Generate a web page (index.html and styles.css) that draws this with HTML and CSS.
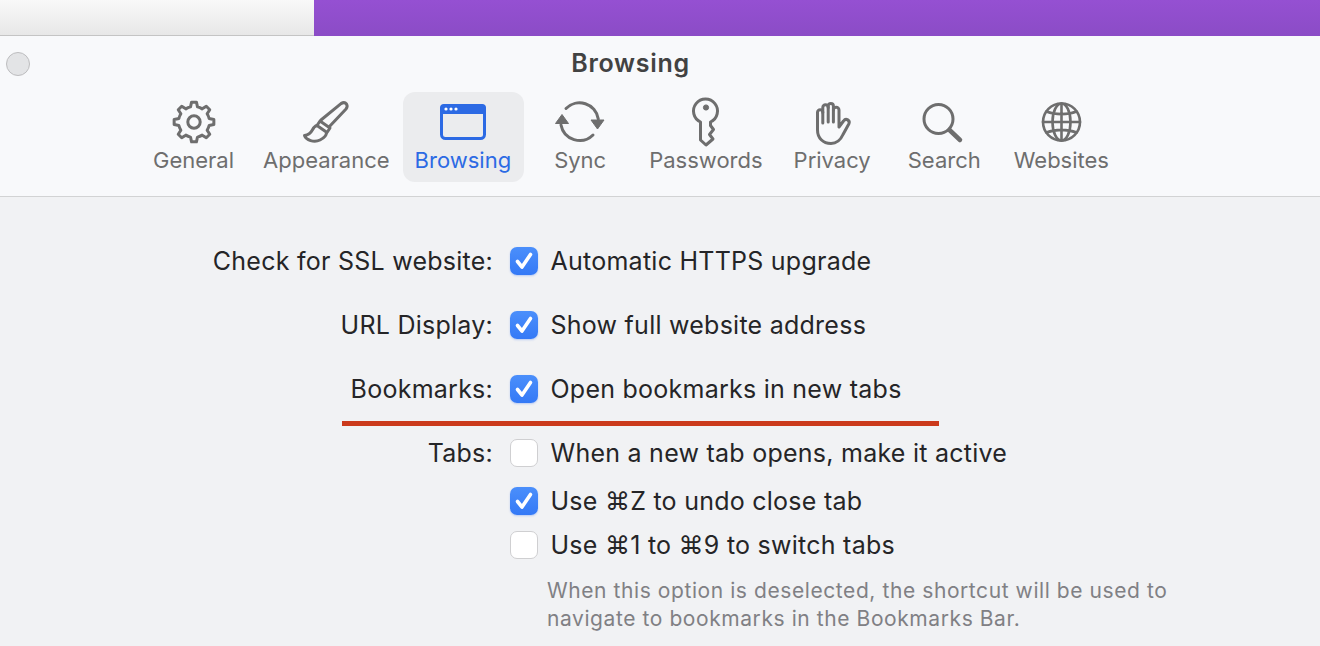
FILE: index.html
```html
<!DOCTYPE html>
<html lang="en">
<head>
<meta charset="utf-8">
<title>Browsing</title>
<link rel="stylesheet" href="styles.css">
</head>
<body>
<div class="backdrop">
  <div class="backdrop-light"></div>
  <div class="backdrop-purple"></div>
</div>
<main class="window">
  <header class="toolbar">
    <span class="close"></span>
    <h1 class="title">Browsing</h1>
    <nav class="tabs">
      <a class="tab tab-general">
        <svg class="icon" viewBox="0 0 60 52"><g transform="translate(8 4)" class="ln"><path d="M18.51 6.9L19.56 2.15H24.44L25.49 6.9A15.5 15.5 0 0 1 30.21 8.86L34.31 6.24L37.76 9.69L35.14 13.79A15.5 15.5 0 0 1 37.1 18.51L41.85 19.56V24.44L37.1 25.49A15.5 15.5 0 0 1 35.14 30.21L37.76 34.31L34.31 37.76L30.21 35.14A15.5 15.5 0 0 1 25.49 37.1L24.44 41.85H19.56L18.51 37.1A15.5 15.5 0 0 1 13.79 35.14L9.69 37.76L6.24 34.31L8.86 30.21A15.5 15.5 0 0 1 6.9 25.49L2.15 24.44V19.56L6.9 18.51A15.5 15.5 0 0 1 8.86 13.79L6.24 9.69L9.69 6.24L13.79 8.86A15.5 15.5 0 0 1 18.51 6.9Z"/><circle cx="22" cy="22" r="6.2"/></g></svg>
        <span class="tab-label">General</span>
      </a>
      <a class="tab tab-appearance">
        <svg class="icon" viewBox="0 0 60 52"><g class="ln"><path d="M25 24L45 7.6Q48.500 5.500 50.500 8Q52 10.500 50 13L33 31"/><path d="M24 25L34 32L31 36.500L21 29.500Z"/><path d="M21 29.500C15 31 18 38 8.500 39.500C10 44 18 47 24 44C29 41.500 30.500 38.500 30.500 36.500"/></g></svg>
        <span class="tab-label">Appearance</span>
      </a>
      <a class="tab tab-browsing is-active">
        <svg class="icon" viewBox="0 0 60 52"><rect class="win" x="8.500" y="9.500" width="43" height="33" rx="4"/><path class="win-bar" d="M11 8H49A4 4 0 0 1 53 12V18H7V12A4 4 0 0 1 11 8Z"/><circle class="dot" cx="13" cy="13" r="1.600"/><circle class="dot" cx="18" cy="13" r="1.600"/><circle class="dot" cx="23" cy="13" r="1.600"/></svg>
        <span class="tab-label">Browsing</span>
      </a>
      <a class="tab tab-sync">
        <svg class="icon" viewBox="0 0 60 52"><g class="ln"><path d="M16 12.500A19 19 0 0 1 48.300 23"/><path d="M11 29A19 19 0 0 0 43 39"/></g><path class="fill" d="M5.500 27.500H18.500L12 18.500Z"/><path class="fill" d="M41 24H54L47.500 33Z"/></svg>
        <span class="tab-label">Sync</span>
      </a>
      <a class="tab tab-passwords">
        <svg class="icon" viewBox="0 0 60 52"><g class="ln"><path d="M24.500 26V44L30 49L37 43L33.500 38.500L37.500 33.500L34.500 29.500V26A12 12 0 1 0 24.500 26Z"/></g><circle class="fill" cx="30" cy="11.500" r="2.600"/></svg>
        <span class="tab-label">Passwords</span>
      </a>
      <a class="tab tab-privacy">
        <svg class="icon" viewBox="0 0 60 52"><g class="ln"><path d="M20.800 27V16.500A2.600 2.600 0 0 0 15.500 16.500V34C15.500 42 21 47.500 29 47.500C36 47.500 39 43 41 38.500L46.800 28C48.500 24.500 44 21.500 41.500 25L37 31V14A2.700 2.700 0 0 0 31.400 14V26"/><path d="M20.800 16.500V11.500A2.700 2.700 0 0 1 26.200 11.500V26"/><path d="M26.200 11.500V10A2.600 2.600 0 0 1 31.400 10V14"/></g></svg>
        <span class="tab-label">Privacy</span>
      </a>
      <a class="tab tab-search">
        <svg class="icon" viewBox="0 0 60 52"><g class="ln"><circle cx="24.500" cy="23" r="14.500"/><path class="ln-heavy" d="M35.500 34L46 44"/></g></svg>
        <span class="tab-label">Search</span>
      </a>
      <a class="tab tab-websites">
        <svg class="icon" viewBox="0 0 60 52"><g class="ln ln-thin"><circle cx="30.500" cy="26" r="18.500"/><ellipse cx="30.500" cy="26" rx="9" ry="18.500"/><path d="M30.500 7.500V44.500M12 26H49M15.500 15.500C24 19 37 19 45.500 15.500M15.500 36.500C24 33 37 33 45.500 36.500"/></g></svg>
        <span class="tab-label">Websites</span>
      </a>
    </nav>
  </header>
  <section class="prefs">
    <div class="row">
      <span class="label">Check for SSL website:</span>
      <span class="box is-on"><svg viewBox="0 0 28 28"><path d="M7.500 14.500L12 20L20.500 7.500"/></svg></span>
      <span class="text">Automatic HTTPS upgrade</span>
    </div>
    <div class="row">
      <span class="label">URL Display:</span>
      <span class="box is-on"><svg viewBox="0 0 28 28"><path d="M7.500 14.500L12 20L20.500 7.500"/></svg></span>
      <span class="text">Show full website address</span>
    </div>
    <div class="row">
      <span class="label">Bookmarks:</span>
      <span class="box is-on"><svg viewBox="0 0 28 28"><path d="M7.500 14.500L12 20L20.500 7.500"/></svg></span>
      <span class="text">Open bookmarks in new tabs</span>
    </div>
    <div class="row row-tabs">
      <span class="label">Tabs:</span>
      <span class="box"></span>
      <span class="text">When a new tab opens, make it active</span>
    </div>
    <div class="row row-sub">
      <span class="label"></span>
      <span class="box is-on"><svg viewBox="0 0 28 28"><path d="M7.500 14.500L12 20L20.500 7.500"/></svg></span>
      <span class="text">Use ⌘Z to undo close tab</span>
    </div>
    <div class="row row-sub">
      <span class="label"></span>
      <span class="box"></span>
      <span class="text">Use ⌘1 to ⌘9 to switch tabs</span>
    </div>
    <p class="hint">When this option is deselected, the shortcut will be used to<br>navigate to bookmarks in the Bookmarks Bar.</p>
    <div class="annotation"></div>
  </section>
</main>
</body>
</html>
```
FILE: styles.css
```css
* { box-sizing: border-box; }
html, body { margin: 0; height: 100%; }
body {
  width: 1320px;
  height: 646px;
  overflow: hidden;
  display: flex;
  flex-direction: column;
  font-family: Inter, "Noto Sans", "Liberation Sans", sans-serif;
  background: #f1f2f4;
}
.backdrop {
  display: flex;
  height: 36px;
  flex: none;
}
.backdrop-light {
  width: 314px;
  background: linear-gradient(#f9f9f9, #e7e7e7);
  border-bottom: 1px solid #c4c4c4;
}
.backdrop-purple {
  flex: 1;
  background: linear-gradient(#9550d2, #8b4cc6);
}
.window {
  flex: 1;
  display: flex;
  flex-direction: column;
}
.toolbar {
  position: relative;
  height: 161px;
  flex: none;
  background: #f8f9fb;
  border-bottom: 1px solid #d2d3d4;
}
.close {
  position: absolute;
  left: 6px;
  top: 16px;
  width: 24px;
  height: 24px;
  border-radius: 50%;
  background: #e3e4e6;
  border: 1px solid #bdbdbf;
}
.title {
  margin: 0;
  padding: 12px 59px 0 0;
  height: 56px;
  text-align: center;
  font-size: 25px;
  line-height: 30px;
  font-weight: 600;
  letter-spacing: .7px;
  color: #424242;
}
.tabs {
  display: flex;
}
.tab {
  display: flex;
  flex-direction: column;
  align-items: center;
  height: 90px;
  padding: 4px 12px 0;
  border-radius: 12px;
  color: #6e6e6e;
}
.tab-general { margin-left: 141px; }
.tab-appearance { margin-left: 5px; }
.tab-browsing { margin-left: 1px; padding-right: 13px; }
.tab-sync { margin-left: 18px; }
.tab-passwords { margin-left: 19px; }
.tab-privacy { margin-left: 7px; }
.tab-search { margin-left: 13px; }
.tab-websites { margin-left: 9px; }
.tab.is-active {
  background: #ebecee;
  color: #2c6ae4;
}
.icon {
  width: 60px;
  height: 52px;
  flex: none;
  margin: 0 -20px;
}
.tab-label {
  font-size: 22px;
  line-height: 28px;
  margin-top: -2px;
  white-space: nowrap;
}
.ln {
  fill: none;
  stroke: #6e6e6e;
  stroke-width: 3;
  stroke-linejoin: round;
  stroke-linecap: round;
}
.ln-thin { stroke-width: 2.6; }
.ln-heavy { stroke-width: 4.5; }
.fill { fill: #6e6e6e; stroke: #6e6e6e; stroke-width: 1; stroke-linejoin: round; }
.win { fill: none; stroke: #2c6ae4; stroke-width: 3; }
.win-bar { fill: #2c6ae4; }
.dot { fill: #fff; }
.prefs {
  position: relative;
  flex: 1;
  padding-top: 32px;
  font-size: 25px;
  letter-spacing: .25px;
  color: #252527;
}
.row {
  display: flex;
  align-items: center;
  height: 64px;
}
.row-tabs { height: 48px; margin-top: 8px; }
.row-tabs + .row-sub { margin-top: 2px; }
.row-sub { height: 44px; }
.label {
  width: 493px;
  text-align: right;
  white-space: nowrap;
}
.box {
  margin-left: 17px;
  width: 28px;
  height: 28px;
  flex: none;
  border-radius: 7px;
  background: #fff;
  border: 1px solid #cfcfd1;
}
.box.is-on {
  border: 0;
  background: linear-gradient(#4b8ffb, #3479f6);
  box-shadow: 0 1px 2px rgba(50, 110, 240, .3);
}
.box svg { display: block; width: 28px; height: 28px; }
.box path {
  fill: none;
  stroke: #fff;
  stroke-width: 3.6;
  stroke-linecap: round;
  stroke-linejoin: round;
}
.text {
  margin-left: 12.500px;
  white-space: nowrap;
}
.hint {
  margin: 10px 0 0 547px;
  font-size: 21px;
  letter-spacing: .58px;
  line-height: 28px;
  color: #808084;
}
.annotation {
  position: absolute;
  left: 342px;
  top: 224px;
  width: 597px;
  height: 4.500px;
  background: #cb3a1c;
}
```
